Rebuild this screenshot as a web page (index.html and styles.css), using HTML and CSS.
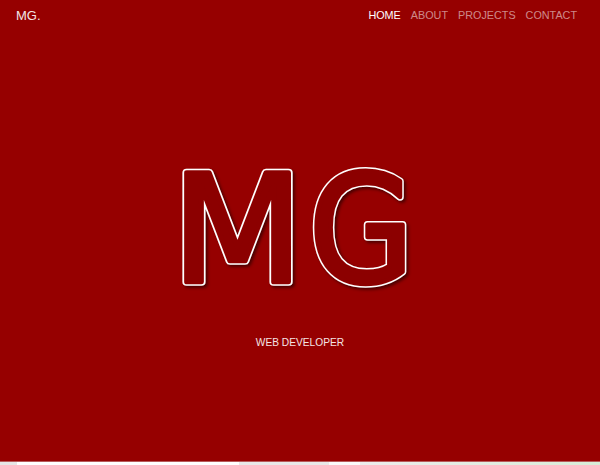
FILE: index.html
```html
<!DOCTYPE html>
<html lang="en">
<head>
<meta charset="utf-8">
<title>MG. Web Developer</title>
<link rel="stylesheet" href="styles.css">
</head>
<body>
<header class="hero">
  <nav class="nav">
    <a class="brand" href="#">MG.</a>
    <ul class="links">
      <li><a class="link active" href="#">HOME</a></li>
      <li><a class="link" href="#">ABOUT</a></li>
      <li><a class="link" href="#">PROJECTS</a></li>
      <li><a class="link" href="#">CONTACT</a></li>
    </ul>
  </nav>
  <div class="center">
    <svg class="mono" width="300" height="140" viewBox="0 0 300 140" aria-label="MG">
      <g transform="translate(32 0) scale(1.13 1) translate(-32 0)">
        <text class="outline" x="23" y="128">M</text>
        <text class="face" x="23" y="128">M</text>
      </g>
      <text class="outline" x="159" y="128">G</text>
      <text class="face" x="159" y="128">G</text>
    </svg>
    <p class="role">WEB DEVELOPER</p>
  </div>
</header>
<div class="strip">
  <span class="s1"></span><span class="s2"></span><span class="s3"></span><span class="s4"></span><span class="s5"></span>
</div>
</body>
</html>
```
FILE: styles.css
```css
* { box-sizing: border-box; }
html, body { margin: 0; padding: 0; }
body {
  font-family: "Liberation Sans", Arial, sans-serif;
  background: #ededed;
}
.hero {
  height: 462px;
  background: #960000;
  display: flex;
  flex-direction: column;
  border-bottom: 1px solid #b85a5a;
}
.nav {
  display: flex;
  justify-content: space-between;
  align-items: center;
  padding: 0 23px 0 16px;
  height: 31px;
}
.brand {
  color: #f2e6e6;
  text-decoration: none;
  font-size: 13px;
}
.links {
  list-style: none;
  margin: 0;
  padding: 0;
  display: flex;
  align-items: center;
  gap: 10px;
  font-size: 10.8px;
  line-height: 1.2;
}
.link {
  display: block;
  color: rgba(255, 255, 255, 0.55);
  text-decoration: none;
}
.link.active { color: #fff; }
.center {
  flex: 1;
  display: flex;
  flex-direction: column;
  align-items: center;
  padding-top: 123px;
}
.mono {
  display: block;
  overflow: visible;
  filter: drop-shadow(2px 2px 1.5px rgba(0, 0, 0, 0.5));
}
.mono text {
  font-family: "DejaVu Sans Condensed", "DejaVu Sans", sans-serif;
  font-size: 150px;
  stroke-linejoin: round;
}
.mono .outline {
  fill: #ffffff;
  stroke: #ffffff;
  stroke-width: 7.6px;
}
.mono .face {
  fill: #8c0000;
  stroke: #8c0000;
  stroke-width: 4.6px;
}
.role {
  margin: 43px 0 0;
  color: #f4e4e4;
  font-size: 10.2px;
}
.strip {
  display: flex;
  height: 3px;
}
.strip span { display: block; height: 3px; }
.s1 { width: 17px; background: #e6e6e6; }
.s2 { width: 222px; background: #ffffff; }
.s3 { width: 90px; background: #e8e8e8; }
.s4 { width: 31px; background: #fafafa; }
.s5 { flex: 1; background: linear-gradient(90deg, #ececec, #d8ecd8); }
```
